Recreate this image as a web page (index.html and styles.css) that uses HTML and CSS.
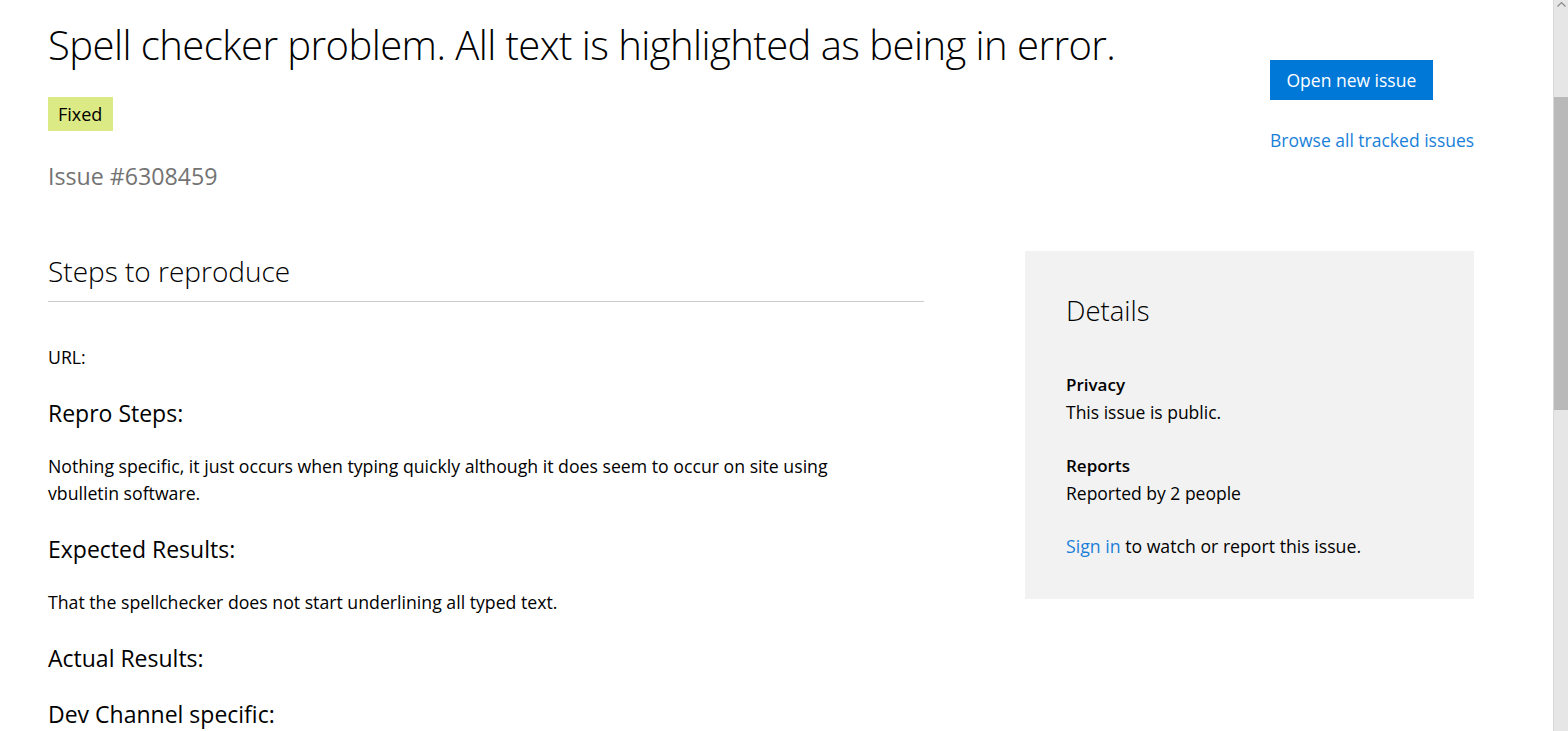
FILE: index.html
```html
<!DOCTYPE html>
<html lang="en">
<head>
<meta charset="utf-8">
<title>Spell checker problem</title>
<link rel="stylesheet" href="styles.css">
</head>
<body>
<div class="page">
  <div class="content">
    <header class="header">
      <div class="header-main">
        <h1 class="title">Spell checker problem. All text is highlighted as being in error.</h1>
        <span class="badge">Fixed</span>
        <div class="issue-no">Issue #6308459</div>
      </div>
      <div class="header-side">
        <a class="btn-primary" href="#">Open new issue</a>
        <a class="link" href="#">Browse all tracked issues</a>
      </div>
    </header>
    <div class="body-row">
      <main class="main-col">
        <h2 class="section-title">Steps to reproduce</h2>
        <div class="desc">
          <p class="text">URL:</p>
          <h3 class="sub">Repro Steps:</h3>
          <p class="text wrap">Nothing specific, it just occurs when typing quickly although it does seem to occur on site using vbulletin software.</p>
          <h3 class="sub">Expected Results:</h3>
          <p class="text">That the spellchecker does not start underlining all typed text.</p>
          <h3 class="sub">Actual Results:</h3>
          <h3 class="sub">Dev Channel specific:</h3>
        </div>
      </main>
      <aside class="details">
        <h2 class="details-title">Details</h2>
        <div class="field">
          <div class="field-label">Privacy</div>
          <div class="field-value">This issue is public.</div>
        </div>
        <div class="field">
          <div class="field-label">Reports</div>
          <div class="field-value">Reported by 2 people</div>
        </div>
        <p class="signin"><a class="link-inline" href="#">Sign in</a> to watch or report this issue.</p>
      </aside>
    </div>
  </div>
  <div class="scrollbar">
    <div class="sb-arrow">
      <svg width="9" height="6" viewBox="0 0 9 6"><path d="M0.5 5.5 L4.5 1.5 L8.5 5.5" fill="none" stroke="#8a8a8a" stroke-width="1.2"/></svg>
    </div>
    <div class="sb-gap-top"></div>
    <div class="sb-thumb"></div>
    <div class="sb-rest"></div>
  </div>
</div>
</body>
</html>
```

FILE: styles.css
```css
html, body {
  margin: 0;
  padding: 0;
  background: #ffffff;
}
body {
  font-family: "Open Sans", "Noto Sans", "Liberation Sans", sans-serif;
  color: #000;
  overflow: hidden;
}
.page {
  display: flex;
  height: 731px;
  overflow: hidden;
}
.content {
  flex: 1;
  padding-left: 48px;
  min-width: 0;
}
.header {
  display: flex;
  width: 1426px;
  justify-content: space-between;
  padding-top: 19px;
}
.title {
  margin: 0;
  font-weight: 300;
  font-size: 40px;
  line-height: 52px;
  color: #000;
  letter-spacing: -0.55px;
  white-space: nowrap;
}
.badge {
  display: inline-block;
  margin-top: 26px;
  background: #dbea85;
  color: #000;
  font-size: 18px;
  line-height: 34px;
  padding: 0 11px 0 10px;
}
.issue-no {
  margin-top: 30px;
  font-size: 23.2px;
  line-height: 30px;
  color: #737373;
}
.header-side {
  display: flex;
  flex-direction: column;
  align-items: flex-start;
  width: 204px;
  padding-top: 41px;
}
.btn-primary {
  display: inline-block;
  background: #0078d7;
  color: #fff;
  text-decoration: none;
  font-size: 17.5px;
  line-height: 40px;
  padding: 0 16.5px;
}
.link {
  margin-top: 27px;
  color: #1a7fd9;
  text-decoration: none;
  font-size: 17.5px;
  line-height: 26px;
  white-space: nowrap;
}
.body-row {
  display: flex;
  width: 1426px;
  justify-content: space-between;
  margin-top: 60px;
}
.main-col {
  width: 876px;
}
.section-title {
  margin: 0;
  padding-top: 2px;
  font-weight: 300;
  font-size: 28px;
  line-height: 36px;
  padding-bottom: 12px;
  border-bottom: 1px solid #cccccc;
}
.desc {
  padding-top: 42px;
}
.text {
  margin: 0 0 26px;
  font-size: 17.7px;
  line-height: 27px;
}
.wrap {
  max-width: 820px;
}
.sub {
  margin: 0 0 24px;
  font-weight: 400;
  font-size: 23px;
  line-height: 32px;
}
.details {
  width: 449px;
  box-sizing: border-box;
  height: 348px;
  background: #f2f2f2;
  padding: 40px 41px;
}
.details-title {
  margin: 0 0 40px;
  font-weight: 300;
  font-size: 27.5px;
  line-height: 40px;
}
.field {
  margin-bottom: 26px;
}
.field-label {
  font-weight: 600;
  font-size: 17px;
  line-height: 27px;
}
.field-value {
  font-size: 17.5px;
  line-height: 28px;
}
.signin {
  margin: 0;
  font-size: 17.7px;
  line-height: 27px;
}
.link-inline {
  color: #1a7fd9;
  text-decoration: none;
}
.scrollbar {
  width: 15px;
  flex: none;
  background: #e6e6e6;
  display: flex;
  flex-direction: column;
  border-left: 1px solid #dadada;
  box-sizing: border-box;
}
.sb-arrow {
  height: 17px;
  display: flex;
  justify-content: center;
  align-items: flex-start;
  padding-top: 1px;
}
.sb-gap-top {
  height: 79px;
}
.sb-thumb {
  height: 313px;
  background: #b9b9b9;
}
.sb-rest {
  flex: 1;
}
```
